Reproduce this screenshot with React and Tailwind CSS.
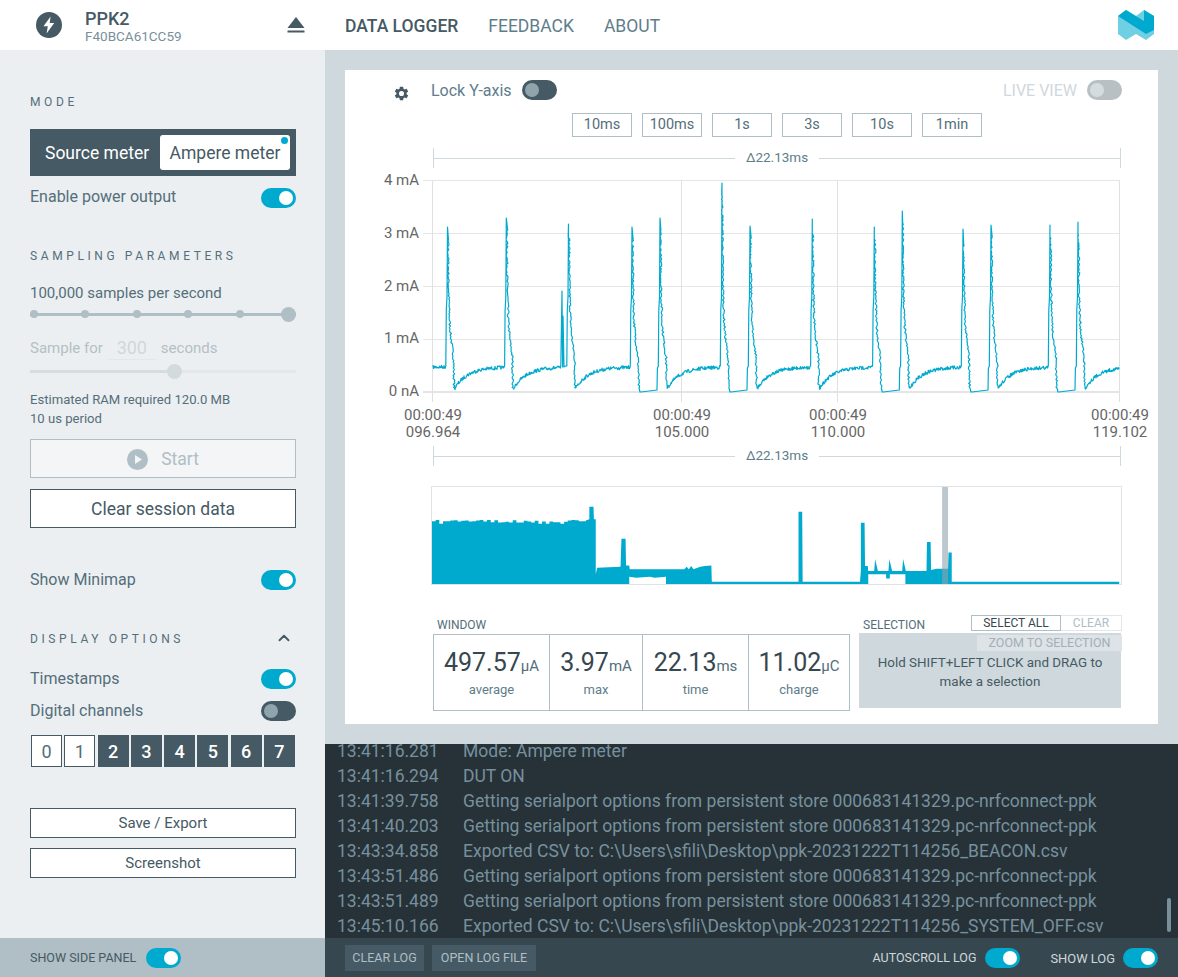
import { ChevronUp } from 'lucide-react';

const font = { fontFamily: 'Roboto, sans-serif' };

const logs = [
  ['13:41:16.281', 'Mode: Ampere meter'],
  ['13:41:16.294', 'DUT ON'],
  ['13:41:39.758', 'Getting serialport options from persistent store 000683141329.pc-nrfconnect-ppk'],
  ['13:41:40.203', 'Getting serialport options from persistent store 000683141329.pc-nrfconnect-ppk'],
  ['13:43:34.858', 'Exported CSV to: C:\\Users\\sfili\\Desktop\\ppk-20231222T114256_BEACON.csv'],
  ['13:43:51.486', 'Getting serialport options from persistent store 000683141329.pc-nrfconnect-ppk'],
  ['13:43:51.489', 'Getting serialport options from persistent store 000683141329.pc-nrfconnect-ppk'],
  ['13:45:10.166', 'Exported CSV to: C:\\Users\\sfili\\Desktop\\ppk-20231222T114256_SYSTEM_OFF.csv'],
];

const spikes = [
  { x: 447.5, top: 227 },
  { x: 506.3, top: 218 },
  { x: 562, top: 291, small: true },
  { x: 568.5, top: 224 },
  { x: 632, top: 227, drop: true },
  { x: 660, top: 218 },
  { x: 722, top: 183, drop: true },
  { x: 750, top: 226 },
  { x: 812.3, top: 219 },
  { x: 874.3, top: 227, drop: true },
  { x: 902.3, top: 211 },
  { x: 963, top: 229, drop: true },
  { x: 991, top: 225 },
  { x: 1050, top: 225, drop: true },
  { x: 1078, top: 222 },
];

// how far right of the peak the falling edge is at a given y
function fallOffset(y) {
  const stops = [[180, 0], [283, 1], [320, 2], [337, 3.3], [357, 6], [388, 6.7]];
  for (let i = 1; i < stops.length; i++) {
    if (y <= stops[i][0]) {
      const [y0, x0] = stops[i - 1];
      const [y1, x1] = stops[i];
      return x0 + ((y - y0) / (y1 - y0)) * (x1 - x0);
    }
  }
  return 6.7;
}

// fake trace, same shape each render
function buildWave() {
  let seed = 7;
  const rnd = () => {
    seed = (seed * 16807) % 2147483647;
    return seed / 2147483647 - 0.5;
  };
  const pts = [];
  let x = 433;
  let from = null;
  let dropped = false;
  const flatTo = (end) => {
    while (x < end) {
      const y = from === null ? 367 : 367 + 21 * Math.exp(-(x - from) / 13);
      pts.push([x, y + rnd() * 3.6]);
      x += 0.5;
    }
  };
  spikes.forEach((s) => {
    if (dropped) {
      pts.push([s.x - 3, 390], [s.x - 2.6, 368], [s.x - 1.6, 366]);
    } else {
      flatTo(s.x - (s.small ? 1 : 2));
    }
    if (s.small) {
      pts.push([s.x, s.top], [s.x + 0.6, 367], [s.x + 1, 316], [s.x + 2, 367], [s.x + 3.5, 366], [s.x + 4.5, 366]);
      x = s.x + 5;
      from = null;
      dropped = false;
      return;
    }
    pts.push([s.x - 1.7, 366], [s.x - 1.2, 310], [s.x - 0.5, 297], [s.x, s.top]);
    // falling edge is many samples, so it reads thicker than the rest
    for (let y = s.top + 12; y < 388; y += 1.5) {
      pts.push([s.x + fallOffset(y) + rnd() * 1.8, y]);
    }
    if (s.drop) {
      pts.push([s.x + 7, 388], [s.x + 8, 392], [s.x + 9, 392]);
      dropped = true;
      from = null;
      x = s.x + 9;
    } else {
      pts.push([s.x + 7, 388]);
      x = s.x + 7.5;
      from = x;
      dropped = false;
    }
  });
  flatTo(1120);
  return pts.map((p) => `${p[0].toFixed(1)},${p[1].toFixed(1)}`).join(' ');
}

const wave = buildWave();

// minimap outline, in the svg's own units
function buildOverview() {
  let seed = 11;
  const rnd = () => {
    seed = (seed * 16807) % 2147483647;
    return seed / 2147483647;
  };
  const head = ['25,435'];
  for (let x = 25; x < 360; x += 8) {
    const y = rnd() > 0.85 ? 250 : 238 + rnd() * 8;
    head.push(`${x},${y.toFixed(0)}`, `${x + 8},${y.toFixed(0)}`);
  }
  return head.join(' ') +
    ' 360,240 368,236 368,198 377,198 378,236 382,236 382,405 385,385 436,382 438,296 447,296 448,378 455,378 456,390 575,390 580,382 585,390 590,380 595,390 610,382 620,380 634,378 635,428 824,428 824,213 832,213 833,428 958,428 960,392 960,247 968,247 969,380 975,380 976,395 989,395 991,358 997,395 1020,395 1022,358 1028,395 1050,395 1052,358 1058,395 1103,395 1104,306 1112,306 1113,392 1125,388 1150,388 1151,338 1158,338 1158,428 1523,428 1523,435';
}

const overview = buildOverview();

function Toggle({ on = true, muted = false, className = '' }) {
  const bg = muted ? 'bg-[#b9c0c3]' : on ? 'bg-[#00a9ce]' : 'bg-[#455a64]';
  const knob = muted ? 'bg-[#d5dcdf]' : on ? 'bg-white' : 'bg-[#90a4ae]';
  return (
    <div className={`flex h-5 w-[35px] shrink-0 items-center rounded-full px-[3px] ${bg} ${on ? 'justify-end' : 'justify-start'} ${className}`}>
      <div className={`h-[14px] w-[14px] rounded-full ${knob}`} />
    </div>
  );
}

function Heading({ children, className = '' }) {
  return <div className={`h-[14px] text-[12px] leading-[16px] tracking-[0.3em] text-[#546e7a] ${className}`}>{children}</div>;
}

function Row({ label, on, className = '', toggleClass = '' }) {
  return (
    <div className={`flex h-[22px] items-center justify-between text-[16px] text-[#546e7a] ${className}`}>
      <span>{label}</span>
      <Toggle on={on} className={toggleClass} />
    </div>
  );
}

function Ruler({ className = '' }) {
  return (
    <div className={`ml-[88px] flex h-5 w-[688px] items-center border-x border-[#cfd8dc] ${className}`}>
      <div className="h-px flex-1 bg-[#cfd8dc]" />
      <span className="px-[11px] text-[13.5px] leading-none text-[#607d8b]">Δ22.13ms</span>
      <div className="h-px flex-1 bg-[#cfd8dc]" />
    </div>
  );
}

function Stat({ value, unit, label, className }) {
  return (
    <div className={`flex flex-col items-center justify-center ${className}`}>
      <div className="leading-[30px] text-[#37474f]">
        <span className="text-[25px]">{value}</span>
        <span className="text-[15px] text-[#546e7a]">{unit}</span>
      </div>
      <div className="mt-px text-[13px] leading-[16px] text-[#607d8b]">{label}</div>
    </div>
  );
}

function Sidebar() {
  return (
    <aside className="flex w-[325px] shrink-0 flex-col bg-[#eceff1]">
      <div className="flex-1 pl-[30px] pr-[29px] pt-[44px]">
        <Heading>MODE</Heading>
        <div className="mt-[21px] flex h-[47px] items-center justify-between bg-[#455a64] pl-[15px] pr-[6px] text-[17.5px]">
          <span className="pt-[2px] text-white">Source meter</span>
          <div className="relative flex h-[35px] w-[130px] items-center justify-center rounded-[3px] bg-white pt-[2px] text-[#455a64]">
            Ampere meter
            <div className="absolute right-[2px] top-[2px] h-[7px] w-[7px] rounded-full bg-[#00a9ce]" />
          </div>
        </div>
        <Row label="Enable power output" className="mt-[10px]" toggleClass="mt-[2px]" />

        <Heading className="mt-[40px]">SAMPLING PARAMETERS</Heading>
        <div className="mt-[21px] h-5 text-[15px] leading-5 text-[#546e7a]">100,000 samples per second</div>
        <div className="relative mt-[3px] flex h-4 items-center gap-[43.5px]">
          <div className="absolute inset-x-0 h-[3px] bg-[#b0bec5]" />
          <div className="relative h-2 w-2 rounded-full bg-[#b0bec5]" />
          <div className="relative h-2 w-2 rounded-full bg-[#b0bec5]" />
          <div className="relative h-2 w-2 rounded-full bg-[#b0bec5]" />
          <div className="relative h-2 w-2 rounded-full bg-[#b0bec5]" />
          <div className="relative h-2 w-2 rounded-full bg-[#b0bec5]" />
          <div className="relative -ml-[6px] h-[15px] w-[15px] rounded-full bg-[#b0bec5]" />
        </div>
        <div className="mt-[15px] flex h-[22px] items-center text-[15px] text-[#b4bfc5]">
          <span>Sample for</span>
          <span className="mx-[4px] w-[50px] border-b border-[#e3e7ea] text-center text-[18px] leading-[22px] text-[#d0d7db]">300</span>
          <span>seconds</span>
        </div>
        <div className="relative mt-[4px] flex h-4 items-center">
          <div className="h-[3px] w-[137px] bg-[#d6dcdf]" />
          <div className="h-[15px] w-[15px] shrink-0 rounded-full bg-[#d3dade]" />
          <div className="h-[3px] flex-1 bg-[#e3e7ea]" />
        </div>
        <div className="mt-[11px] text-[13.1px] leading-[19px] text-[#546e7a]">
          <div>Estimated RAM required 120.0 MB</div>
          <div>10 us period</div>
        </div>
        <button className="mt-[11px] flex h-[39px] w-full items-center justify-center gap-[13px] border border-[#b0bec5] bg-[#f4f5f7] pt-px text-[17.5px] text-[#b0bec5]">
          <svg width="21" height="21" viewBox="0 0 21 21">
            <circle cx="10.5" cy="10.5" r="10.5" fill="#b0bec5" />
            <path d="M8 6l7 4.5L8 15z" fill="#f4f5f7" />
          </svg>
          Start
        </button>
        <button className="mt-[11px] flex h-[39px] w-full items-center justify-center border border-[#455a64] bg-white pt-px text-[17.5px] text-[#455a64]">
          Clear session data
        </button>
        <Row label="Show Minimap" className="mt-[41px]" />
        <div className="mt-[40px] flex h-[14px] items-center justify-between">
          <Heading>DISPLAY OPTIONS</Heading>
          <ChevronUp size={18} strokeWidth={2.5} className="mr-[3px] text-[#455a64]" />
        </div>
        <Row label="Timestamps" className="mt-[23px]" />
        <Row label="Digital channels" on={false} className="mt-[10px]" />
        <div className="mt-[13px] flex justify-between px-px">
          {[0, 1, 2, 3, 4, 5, 6, 7].map((n) => (
            <div
              key={n}
              className={`flex h-[32px] w-[31px] items-center justify-center border text-[18px] ${
                n < 2 ? 'border-[#455a64] bg-white text-[#546e7a]' : 'border-[#455a64] bg-[#455a64] font-medium text-white'
              }`}
            >
              {n}
            </div>
          ))}
        </div>
        <button className="mt-[41px] flex h-[30px] w-full items-center justify-center border border-[#455a64] bg-white text-[15px] text-[#455a64]">
          Save / Export
        </button>
        <button className="mt-[10px] flex h-[30px] w-full items-center justify-center border border-[#455a64] bg-white text-[15px] text-[#455a64]">
          Screenshot
        </button>
      </div>
      <div className="flex h-[39px] items-center gap-[10px] bg-[#b0bec5] pl-[30px] text-[12.5px] text-[#455a64]">
        <span className="pt-[2px]">SHOW SIDE PANEL</span>
        <Toggle />
      </div>
    </aside>
  );
}

function Chart() {
  const grid = [180, 233, 286, 339];
  const labels = ['4 mA', '3 mA', '2 mA', '1 mA', '0 nA'];
  const ticks = [
    [433, '096.964'],
    [682, '105.000'],
    [838, '110.000'],
    [1120, '119.102'],
  ];
  return (
    <svg className="mt-[2px] block" width="813" height="275" viewBox="345 170 813 275" style={font}>
      {grid.map((y) => (
        <line key={y} x1="423" x2="1120" y1={y + 0.5} y2={y + 0.5} stroke="#e6e6e6" />
      ))}
      <line x1="423" x2="1120" y1="392" y2="392" stroke="#dcdcdc" strokeWidth="1.5" />
      {ticks.map(([x]) => (
        <line key={x} x1={x - 0.5} x2={x - 0.5} y1="180" y2="402" stroke="#e0e0e0" />
      ))}
      {labels.map((t, i) => (
        <text key={t} x="419" y={185 + i * 52.8} textAnchor="end" fontSize="15" fill="#666">
          {t}
        </text>
      ))}
      {ticks.map(([x, t]) => (
        <text key={x} x={x} y="420" textAnchor="middle" fontSize="15" fill="#666">
          00:00:49
          <tspan x={x} y="437">{t}</tspan>
        </text>
      ))}
      <polyline points={wave} fill="none" stroke="#00a9ce" strokeWidth="1.2" strokeLinejoin="round" />
    </svg>
  );
}

function Minimap() {
  return (
    <div className="ml-[86px] mt-[20px] h-[99px] w-[691px] border border-[#dde3e6]">
      <svg className="block h-full w-full" viewBox="25 137 1502 298" preserveAspectRatio="none">
        <polygon points={overview} fill="#00a9ce" />
        <polygon points="455,435 455,413 470,416 500,413 510,416 535,413 535,435" fill="#fff" />
        <polygon points="976,435 976,405 1015,405 1015,418 1023,418 1023,405 1057,405 1057,435" fill="#fff" />
        <rect x="1137" y="137" width="13" height="298" fill="#90a4ae" fillOpacity="0.6" />
      </svg>
    </div>
  );
}

function Stats() {
  return (
    <div className="ml-[88px] mt-[30px] flex">
      <div className="w-[417px]">
        <div className="h-[19px] pl-[4px] pt-[3px] text-[12px] leading-[14px] text-[#546e7a]">WINDOW</div>
        <div className="flex h-[77px] border border-[#b0bec5]">
          <Stat value="497.57" unit="μA" label="average" className="w-[115px]" />
          <Stat value="3.97" unit="mA" label="max" className="w-[93px] border-l border-[#b0bec5]" />
          <Stat value="22.13" unit="ms" label="time" className="w-[106px] border-l border-[#b0bec5]" />
          <Stat value="11.02" unit="μC" label="charge" className="flex-1 border-l border-[#b0bec5]" />
        </div>
      </div>
      <div className="ml-[9px] w-[262px]">
        <div className="-mr-px flex h-[18px] items-start justify-between">
          <span className="pl-[4px] pt-[3px] text-[12px] leading-[14px] text-[#546e7a]">SELECTION</span>
          <div className="flex h-[16px] text-[12px] leading-[14px]">
            <span className="w-[90px] border border-[#b0bec5] bg-white text-center text-[#37474f]">SELECT ALL</span>
            <span className="w-[61px] border border-l-0 border-[#e3e7ea] text-center text-[#b0bec5]">CLEAR</span>
          </div>
        </div>
        <div className="relative flex h-[75px] flex-col items-center justify-center bg-[#cfd8dc] px-4 pt-[2px] text-center text-[13.4px] leading-[19px] text-[#455a64]">
          <div className="absolute -right-px top-[2px] h-[16px] w-[145px] bg-[#dde3e6] text-[12.5px] leading-[16px] text-[#a3b0b7]">ZOOM TO SELECTION</div>
          Hold SHIFT+LEFT CLICK and DRAG to make a selection
        </div>
      </div>
    </div>
  );
}

export default function App() {
  return (
    <div className="flex h-[977px] w-[1178px] flex-col overflow-hidden bg-[#cfd8dc]" style={font}>
      <header className="flex h-[50px] shrink-0 items-center bg-white">
        <div className="ml-[36px] flex h-[26px] w-[26px] items-center justify-center rounded-full bg-[#455a64]">
          <svg width="14" height="18" viewBox="0 0 14 18">
            <path d="M8.6 0.5L1.5 10.2h4.3L4.6 17.5l7.6-10.4H7.7z" fill="#fff" />
          </svg>
        </div>
        <div className="ml-[23px] w-[200px] pt-[2px]">
          <div className="text-[18px] font-medium leading-[18px] text-[#455a64]">PPK2</div>
          <div className="pt-[1px] text-[13.5px] leading-[14px] text-[#78909c]">F40BCA61CC59</div>
        </div>
        <svg className="ml-[2px]" width="18" height="17" viewBox="0 0 18 17">
          <path d="M9 0l8.5 11H.5z" fill="#455a64" />
          <rect x="0.5" y="13.5" width="17" height="2" fill="#455a64" />
        </svg>
        <nav className="ml-[40px] flex gap-[30px] pt-[2px] text-[17.5px] text-[#607d8b]">
          <span className="font-medium text-[#455a64]">DATA LOGGER</span>
          <span>FEEDBACK</span>
          <span>ABOUT</span>
        </nav>
        <svg className="ml-auto mr-[24px]" width="36" height="30" viewBox="0 0 36 30">
          <polygon points="0,6 8,0 18,6 26,0 36,6 36,24 28,30 18,24 8,30 0,24" fill="#6fd0e4" />
          <polygon points="0,6 8,0 26,11 26,0 36,6 36,20 28,24" fill="#00a9ce" />
        </svg>
      </header>

      <div className="flex min-h-0 flex-1">
        <Sidebar />
        <div className="flex min-w-0 flex-1 flex-col">
          <main className="h-[694px] shrink-0 px-[20px] pt-[20px]">
            <div className="h-[654px] bg-white">
              <div className="flex h-[40px] items-center pl-[48px] pr-[36px]">
                <svg className="mt-[6px]" width="17" height="17" viewBox="0 0 24 24" fill="#455a64">
                  <path d="M19.14 12.94c.04-.3.06-.61.06-.94s-.02-.64-.07-.94l2.03-1.58a.49.49 0 00.12-.61l-1.92-3.32a.49.49 0 00-.59-.22l-2.39.96a7 7 0 00-1.62-.94l-.36-2.54a.48.48 0 00-.48-.41h-3.84a.48.48 0 00-.47.41l-.36 2.54c-.59.24-1.13.57-1.62.94l-2.39-.96a.49.49 0 00-.59.22L2.74 8.87a.48.48 0 00.12.61l2.03 1.58c-.05.3-.09.63-.09.94s.02.64.07.94l-2.03 1.58a.49.49 0 00-.12.61l1.92 3.32c.12.22.37.29.59.22l2.39-.96c.5.38 1.03.7 1.62.94l.36 2.54c.05.24.24.41.48.41h3.84c.24 0 .44-.17.47-.41l.36-2.54c.59-.24 1.13-.56 1.62-.94l2.39.96c.22.08.47 0 .59-.22l1.92-3.32a.48.48 0 00-.12-.61l-2.01-1.58zM12 15.6A3.6 3.6 0 1112 8.4a3.6 3.6 0 010 7.2z" />
                </svg>
                <span className="ml-[21px] pt-px text-[16px] text-[#607d8b]">Lock Y-axis</span>
                <div className="ml-[10px]"><Toggle on={false} /></div>
                <span className="ml-auto pt-px text-[16px] text-[#cfd8dc]">LIVE VIEW</span>
                <div className="ml-[10px]"><Toggle on={false} muted /></div>
              </div>
              <div className="ml-[227px] mt-[3px] flex gap-[10px]">
                {['10ms', '100ms', '1s', '3s', '10s', '1min'].map((t) => (
                  <div key={t} className="flex h-[24px] w-[60px] items-center justify-center border border-[#b0bec5] text-[14.5px] text-[#546e7a]">{t}</div>
                ))}
              </div>
              <Ruler className="mt-[11px]" />
              <Chart />
              <Ruler className="mt-px" />
              <Minimap />
              <Stats />
            </div>
          </main>
          <section className="relative min-h-0 flex-1 overflow-hidden bg-[#263238]">
            <div className="-mt-[5px] pl-[12px]">
              {logs.map(([time, msg]) => (
                <div key={time} className="flex h-[25px] items-center text-[17.5px] text-[#78909c]">
                  <span className="w-[126px] shrink-0">{time}</span>
                  <span className="whitespace-nowrap">{msg}</span>
                </div>
              ))}
            </div>
            <div className="absolute left-[842px] top-[154px] h-[34px] w-[4px] rounded-full bg-[#78909c]" />
          </section>
          <footer className="flex h-[39px] shrink-0 items-center bg-[#37474f] pl-[20px] pr-[20px] text-[12.5px]">
            <span className="flex h-[26px] w-[79px] items-center justify-center bg-[#455a64] pt-[2px] text-[#b0bec5]">CLEAR LOG</span>
            <span className="ml-[8px] flex h-[26px] w-[104px] items-center justify-center bg-[#455a64] pt-[2px] text-[#b0bec5]">OPEN LOG FILE</span>
            <span className="ml-auto pt-[2px] text-[#cfd8dc]">AUTOSCROLL LOG</span>
            <div className="ml-[9px]"><Toggle /></div>
            <span className="ml-[30px] pt-[2px] text-[12.9px] text-[#cfd8dc]">SHOW LOG</span>
            <div className="ml-[8px]"><Toggle /></div>
          </footer>
        </div>
      </div>
    </div>
  );
}
